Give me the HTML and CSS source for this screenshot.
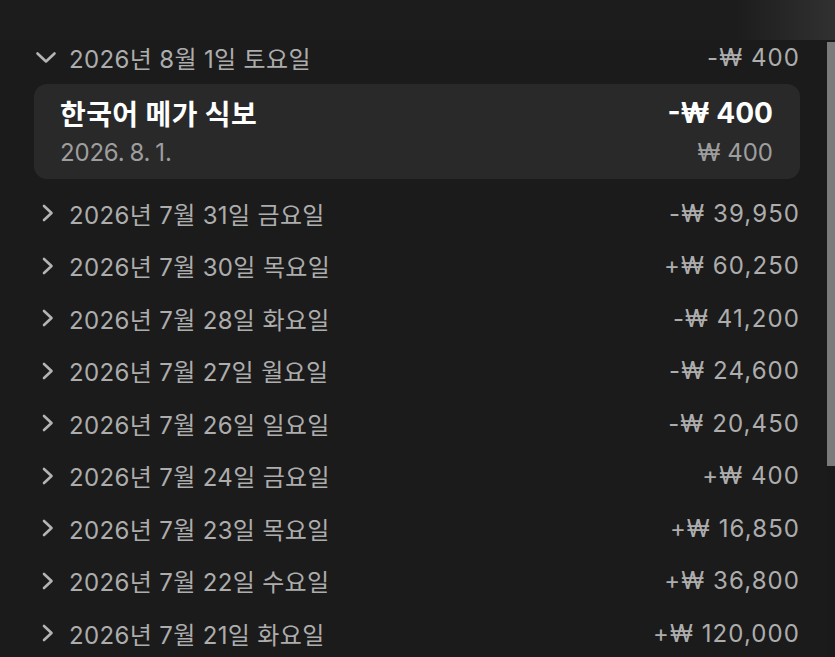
FILE: index.html
```html
<!DOCTYPE html>
<html lang="ko">
<head>
<meta charset="utf-8">
<title>내역</title>
<link rel="stylesheet" href="styles.css">
</head>
<body>
<div class="page">
  <div class="topbar"></div>
  <div class="body">
    <main class="list">
      <div class="group-head">
        <svg class="chev" viewBox="0 0 24 24"><path d="M3.5 8.5 L12 16.5 L20.5 8.5"/></svg>
        <span class="date">2026년 8월 1일 토요일</span>
        <span class="sum">-₩ 400</span>
      </div>
      <div class="card">
        <div class="card-row">
          <span class="title">한국어 메가 식보</span>
          <span class="amount">-₩ 400</span>
        </div>
        <div class="card-row sub">
          <span class="card-date">2026. 8. 1.</span>
          <span>₩ 400</span>
        </div>
      </div>
      <div class="group-head closed">
        <svg class="chev" viewBox="0 0 24 24"><path d="M10 5 L17.5 12 L10 19"/></svg>
        <span class="date">2026년 7월 31일 금요일</span>
        <span class="sum">-₩ 39,950</span>
      </div>
      <div class="group-head closed">
        <svg class="chev" viewBox="0 0 24 24"><path d="M10 5 L17.5 12 L10 19"/></svg>
        <span class="date">2026년 7월 30일 목요일</span>
        <span class="sum">+₩ 60,250</span>
      </div>
      <div class="group-head closed">
        <svg class="chev" viewBox="0 0 24 24"><path d="M10 5 L17.5 12 L10 19"/></svg>
        <span class="date">2026년 7월 28일 화요일</span>
        <span class="sum">-₩ 41,200</span>
      </div>
      <div class="group-head closed">
        <svg class="chev" viewBox="0 0 24 24"><path d="M10 5 L17.5 12 L10 19"/></svg>
        <span class="date">2026년 7월 27일 월요일</span>
        <span class="sum">-₩ 24,600</span>
      </div>
      <div class="group-head closed">
        <svg class="chev" viewBox="0 0 24 24"><path d="M10 5 L17.5 12 L10 19"/></svg>
        <span class="date">2026년 7월 26일 일요일</span>
        <span class="sum">-₩ 20,450</span>
      </div>
      <div class="group-head closed">
        <svg class="chev" viewBox="0 0 24 24"><path d="M10 5 L17.5 12 L10 19"/></svg>
        <span class="date">2026년 7월 24일 금요일</span>
        <span class="sum">+₩ 400</span>
      </div>
      <div class="group-head closed">
        <svg class="chev" viewBox="0 0 24 24"><path d="M10 5 L17.5 12 L10 19"/></svg>
        <span class="date">2026년 7월 23일 목요일</span>
        <span class="sum">+₩ 16,850</span>
      </div>
      <div class="group-head closed">
        <svg class="chev" viewBox="0 0 24 24"><path d="M10 5 L17.5 12 L10 19"/></svg>
        <span class="date">2026년 7월 22일 수요일</span>
        <span class="sum">+₩ 36,800</span>
      </div>
      <div class="group-head closed">
        <svg class="chev" viewBox="0 0 24 24"><path d="M10 5 L17.5 12 L10 19"/></svg>
        <span class="date">2026년 7월 21일 화요일</span>
        <span class="sum">+₩ 120,000</span>
      </div>
    </main>
    <div class="scrollbar"><div class="thumb"></div></div>
  </div>
</div>
</body>
</html>
```

FILE: styles.css
```css
html, body {
  margin: 0;
  padding: 0;
  background: #1b1b1b;
  height: 100%;
  overflow: hidden;
}
.page {
  width: 835px;
  height: 657px;
  display: flex;
  flex-direction: column;
  font-family: "Inter", "Noto Sans CJK KR", sans-serif;
  color: #adadad;
}
.topbar {
  height: 40px;
  flex: none;
  background: linear-gradient(to right, #1c1c1c 0%, #1c1c1c 88%, #2a2a2a 96%, #313131 100%);
}
.body {
  flex: 1;
  display: flex;
  min-height: 0;
}
.list {
  flex: 1;
  min-width: 0;
  display: flex;
  flex-direction: column;
}
.group-head {
  height: 52.5px;
  flex: none;
  display: flex;
  align-items: center;
  padding: 0 28px 0 34px;
  font-size: 24px;
}
.group-head:first-child {
  height: 34px;
}
.chev {
  width: 24px;
  height: 24px;
  flex: none;
  margin-right: 11px;
  fill: none;
  stroke: #b4b4b4;
  stroke-width: 2.6;
  stroke-linecap: round;
  stroke-linejoin: round;
}
.date {
  flex: 1;
  white-space: nowrap;
  letter-spacing: 0.35px;
}
.sum {
  white-space: nowrap;
  letter-spacing: 1.1px;
  margin-right: -1.1px;
}
.card {
  flex: none;
  margin: 10px 27px 8px 34px;
  height: 95px;
  box-sizing: border-box;
  background: #292929;
  border-radius: 13px;
  padding: 12px 27px 0 26px;
  display: flex;
  flex-direction: column;
}
.card-row {
  display: flex;
  justify-content: space-between;
  align-items: center;
  height: 34px;
}
.title {
  color: #ffffff;
  font-weight: 700;
  font-size: 28px;
  letter-spacing: 0.4px;
}
.amount {
  color: #ffffff;
  font-weight: 700;
  font-size: 28px;
}
.card-row.sub {
  margin-top: 5px;
  font-size: 24px;
  color: #9e9e9e;
}
.card-date {
  word-spacing: -1.5px;
  letter-spacing: -0.2px;
}
.scrollbar {
  width: 8px;
  flex: none;
  background: #1a1a1a;
  padding-top: 2px;
}
.thumb {
  height: 424px;
  background: #7b7b7b;
}
```
